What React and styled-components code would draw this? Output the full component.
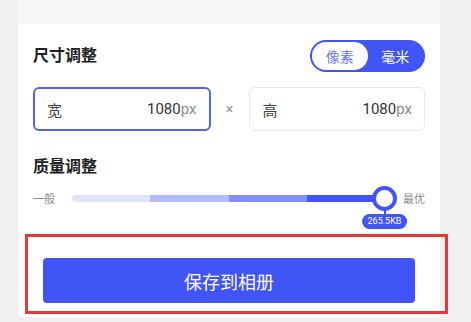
import styled, { createGlobalStyle } from "styled-components";

const GlobalStyle = createGlobalStyle`
  body {
    margin: 0;
    background: #f0f0f0;
    font-family: Roboto, "Noto Sans CJK SC", "Noto Sans", sans-serif;
  }
`;

const BLUE = "#4154f5";

const Page = styled.div`
  width: 471px;
  height: 322px;
  overflow: hidden;
`;

const Card = styled.div`
  width: 422px;
  margin-left: 18px;
  background: #ffffff;
`;

const TopStrip = styled.div`
  height: 24px;
  background: #f5f6f7;
`;

const Body = styled.div`
  padding: 16px 15px 0;
`;

const HeaderRow = styled.div`
  display: flex;
  align-items: center;
  justify-content: space-between;
  height: 32px;
`;

const Title = styled.h2`
  margin: ${(p) => p.$top || 0}px 0 0;
  font-size: 16px;
  line-height: 22px;
  font-weight: 600;
  color: #222222;
`;

const Toggle = styled.div`
  display: flex;
  width: 115px;
  height: 32px;
  box-sizing: border-box;
  padding: 2px;
  border-radius: 16px;
  background: ${BLUE};
`;

const ToggleOption = styled.div`
  flex: 1;
  display: flex;
  align-items: center;
  justify-content: center;
  border-radius: 14px;
  font-size: 14px;
  background: ${(p) => (p.$active ? "#ffffff" : "transparent")};
  color: ${(p) => (p.$active ? "#6a78ee" : "#ffffff")};
`;

const InputRow = styled.div`
  display: flex;
  align-items: center;
  margin-top: 15px;
`;

const Field = styled.div`
  flex: 1;
  height: 44px;
  box-sizing: border-box;
  display: flex;
  align-items: center;
  justify-content: space-between;
  padding: 0 12px;
  border-radius: 6px;
  border: ${(p) => (p.$focused ? "2px solid #5563e8" : "1px solid #e8e8e8")};
  padding-left: ${(p) => (p.$focused ? 12 : 13)}px;
`;

const FieldLabel = styled.span`
  font-size: 15px;
  color: #444444;
`;

const FieldValue = styled.span`
  font-size: 15px;
  color: #333333;
`;

const Unit = styled.span`
  color: #8a8a8a;
`;

const Times = styled.span`
  width: 38px;
  text-align: center;
  font-size: 14px;
  color: #999999;
`;

const SliderRow = styled.div`
  display: flex;
  align-items: center;
  height: 24px;
  margin-top: 8px;
`;

const SliderLabel = styled.span`
  font-size: 11px;
  color: #8a8a8a;
`;

const Track = styled.div`
  position: relative;
  flex: 1;
  display: flex;
  height: 7px;
  margin: 0 18px 0 17px;
`;

const Segment = styled.div`
  flex: 1;
  background: ${(p) => p.$color};
  &:first-child {
    border-radius: 4px 0 0 4px;
  }
`;

const Thumb = styled.div`
  position: absolute;
  right: -12px;
  top: 50%;
  width: 25px;
  height: 25px;
  margin-top: -12.5px;
  box-sizing: border-box;
  border-radius: 50%;
  border: 4px solid ${BLUE};
  background: #ffffff;
`;

const Stem = styled.div`
  position: absolute;
  left: 50%;
  top: 20px;
  width: 2px;
  height: 5px;
  margin-left: -1px;
  background: ${BLUE};
`;

const Badge = styled.div`
  position: absolute;
  top: 24px;
  left: 50%;
  transform: translateX(-50%);
  padding: 0 6px;
  height: 15px;
  line-height: 15px;
  border-radius: 8px;
  background: ${BLUE};
  color: #ffffff;
  font-size: 9px;
  white-space: nowrap;
`;

const Footer = styled.div`
  position: relative;
  padding: 48px 25px 14px;
`;

const SaveButton = styled.button`
  display: block;
  width: 100%;
  height: 45px;
  border: none;
  border-radius: 4px;
  background: ${BLUE};
  color: #ffffff;
  font-family: inherit;
  font-size: 18px;
`;

const Highlight = styled.div`
  position: absolute;
  left: 7px;
  right: -8px;
  top: 24px;
  bottom: 3px;
  border: 3px solid #e2393c;
  pointer-events: none;
`;

const segments = ["#e0e4fc", "#b3bcf8", "#7f8ff4", BLUE];

export default function App() {
  return (
    <Page>
      <GlobalStyle />
      <Card>
        <TopStrip />
        <Body>
          <HeaderRow>
            <Title>尺寸调整</Title>
            <Toggle>
              <ToggleOption $active>像素</ToggleOption>
              <ToggleOption>毫米</ToggleOption>
            </Toggle>
          </HeaderRow>
          <InputRow>
            <Field $focused>
              <FieldLabel>宽</FieldLabel>
              <FieldValue>
                1080<Unit>px</Unit>
              </FieldValue>
            </Field>
            <Times>×</Times>
            <Field>
              <FieldLabel>高</FieldLabel>
              <FieldValue>
                1080<Unit>px</Unit>
              </FieldValue>
            </Field>
          </InputRow>
          <Title $top={25}>质量调整</Title>
          <SliderRow>
            <SliderLabel>一般</SliderLabel>
            <Track>
              {segments.map((c) => (
                <Segment key={c} $color={c} />
              ))}
              <Thumb>
                <Stem />
                <Badge>265.5KB</Badge>
              </Thumb>
            </Track>
            <SliderLabel>最优</SliderLabel>
          </SliderRow>
        </Body>
        <Footer>
          <Highlight />
          <SaveButton>保存到相册</SaveButton>
        </Footer>
      </Card>
    </Page>
  );
}
